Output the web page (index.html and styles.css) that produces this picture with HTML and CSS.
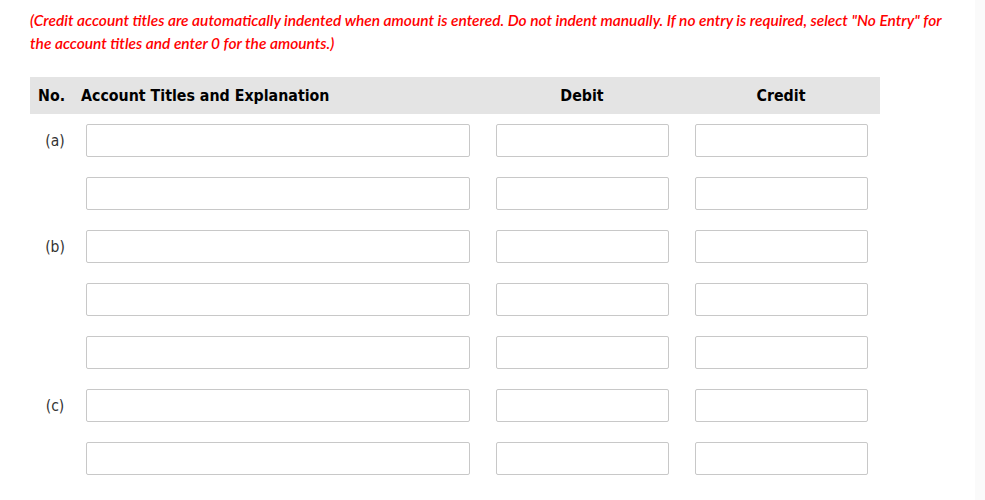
FILE: index.html
```html
<!DOCTYPE html>
<html>
<head>
<meta charset="utf-8">
<link rel="stylesheet" href="styles.css">
</head>
<body>
<div class="page">
  <div class="content">
    <p class="note">(Credit account titles are automatically indented when amount is entered. Do not indent manually. If no entry is required, select "No Entry" for the account titles and enter 0 for the amounts.)</p>
    <div class="journal">
      <div class="head">
        <div class="h-no">No.</div>
        <div class="h-acct">Account Titles and Explanation</div>
        <div class="h-amt">Debit</div>
        <div class="h-amt">Credit</div>
      </div>
      <div class="row"><div class="no">(a)</div><div class="acct"><input class="in wide"></div><div class="amt"><input class="in"></div><div class="amt"><input class="in"></div></div>
      <div class="row"><div class="no"></div><div class="acct"><input class="in wide"></div><div class="amt"><input class="in"></div><div class="amt"><input class="in"></div></div>
      <div class="row"><div class="no">(b)</div><div class="acct"><input class="in wide"></div><div class="amt"><input class="in"></div><div class="amt"><input class="in"></div></div>
      <div class="row"><div class="no"></div><div class="acct"><input class="in wide"></div><div class="amt"><input class="in"></div><div class="amt"><input class="in"></div></div>
      <div class="row"><div class="no"></div><div class="acct"><input class="in wide"></div><div class="amt"><input class="in"></div><div class="amt"><input class="in"></div></div>
      <div class="row"><div class="no">(c)</div><div class="acct"><input class="in wide"></div><div class="amt"><input class="in"></div><div class="amt"><input class="in"></div></div>
      <div class="row"><div class="no"></div><div class="acct"><input class="in wide"></div><div class="amt"><input class="in"></div><div class="amt"><input class="in"></div></div>
    </div>
  </div>
  <div class="side"></div>
</div>
</body>
</html>
```
FILE: styles.css
```css
* { box-sizing: border-box; }
html, body { margin: 0; padding: 0; background: #fff; }
.page { display: flex; width: 985px; height: 500px; overflow: hidden; }
.content { width: 975px; padding: 9px 0 0 30px; background: #fff; }
.side { width: 10px; background: #fafafa; }
.note {
  margin: 0;
  width: 925px;
  font-family: Lato, "Liberation Sans", sans-serif;
  font-style: italic;
  font-weight: 600;
  font-size: 15.5px;
  line-height: 23px;
  color: #ff0000;
  letter-spacing: 0;
}
.journal { margin-top: 22px; width: 850px; font-family: "DejaVu Sans Condensed", "DejaVu Sans", sans-serif; }
.head {
  display: grid;
  grid-template-columns: 51px 401px 200px 198px;
  height: 37px;
  align-items: center;
  background: #e4e4e4;
  font-weight: 700;
  font-size: 15.8px;
  color: #000;
}
.h-no { padding-left: 8px; }
.h-amt { text-align: center; }
.row {
  display: grid;
  grid-template-columns: 51px 401px 200px 198px;
  align-items: center;
  margin-top: 10px;
  height: 33px;
}
.row + .row { margin-top: 20px; }
.no { text-align: center; font-size: 15.5px; color: #333; padding-right: 1px; }
.acct { padding-left: 5px; }
.amt { display: flex; justify-content: center; }
.in {
  display: block;
  width: 173px;
  height: 33px;
  border: 1px solid #c8c8c8;
  border-radius: 2px;
  background: #fff;
  margin: 0;
  padding: 0;
}
.in.wide { width: 384px; }
```
